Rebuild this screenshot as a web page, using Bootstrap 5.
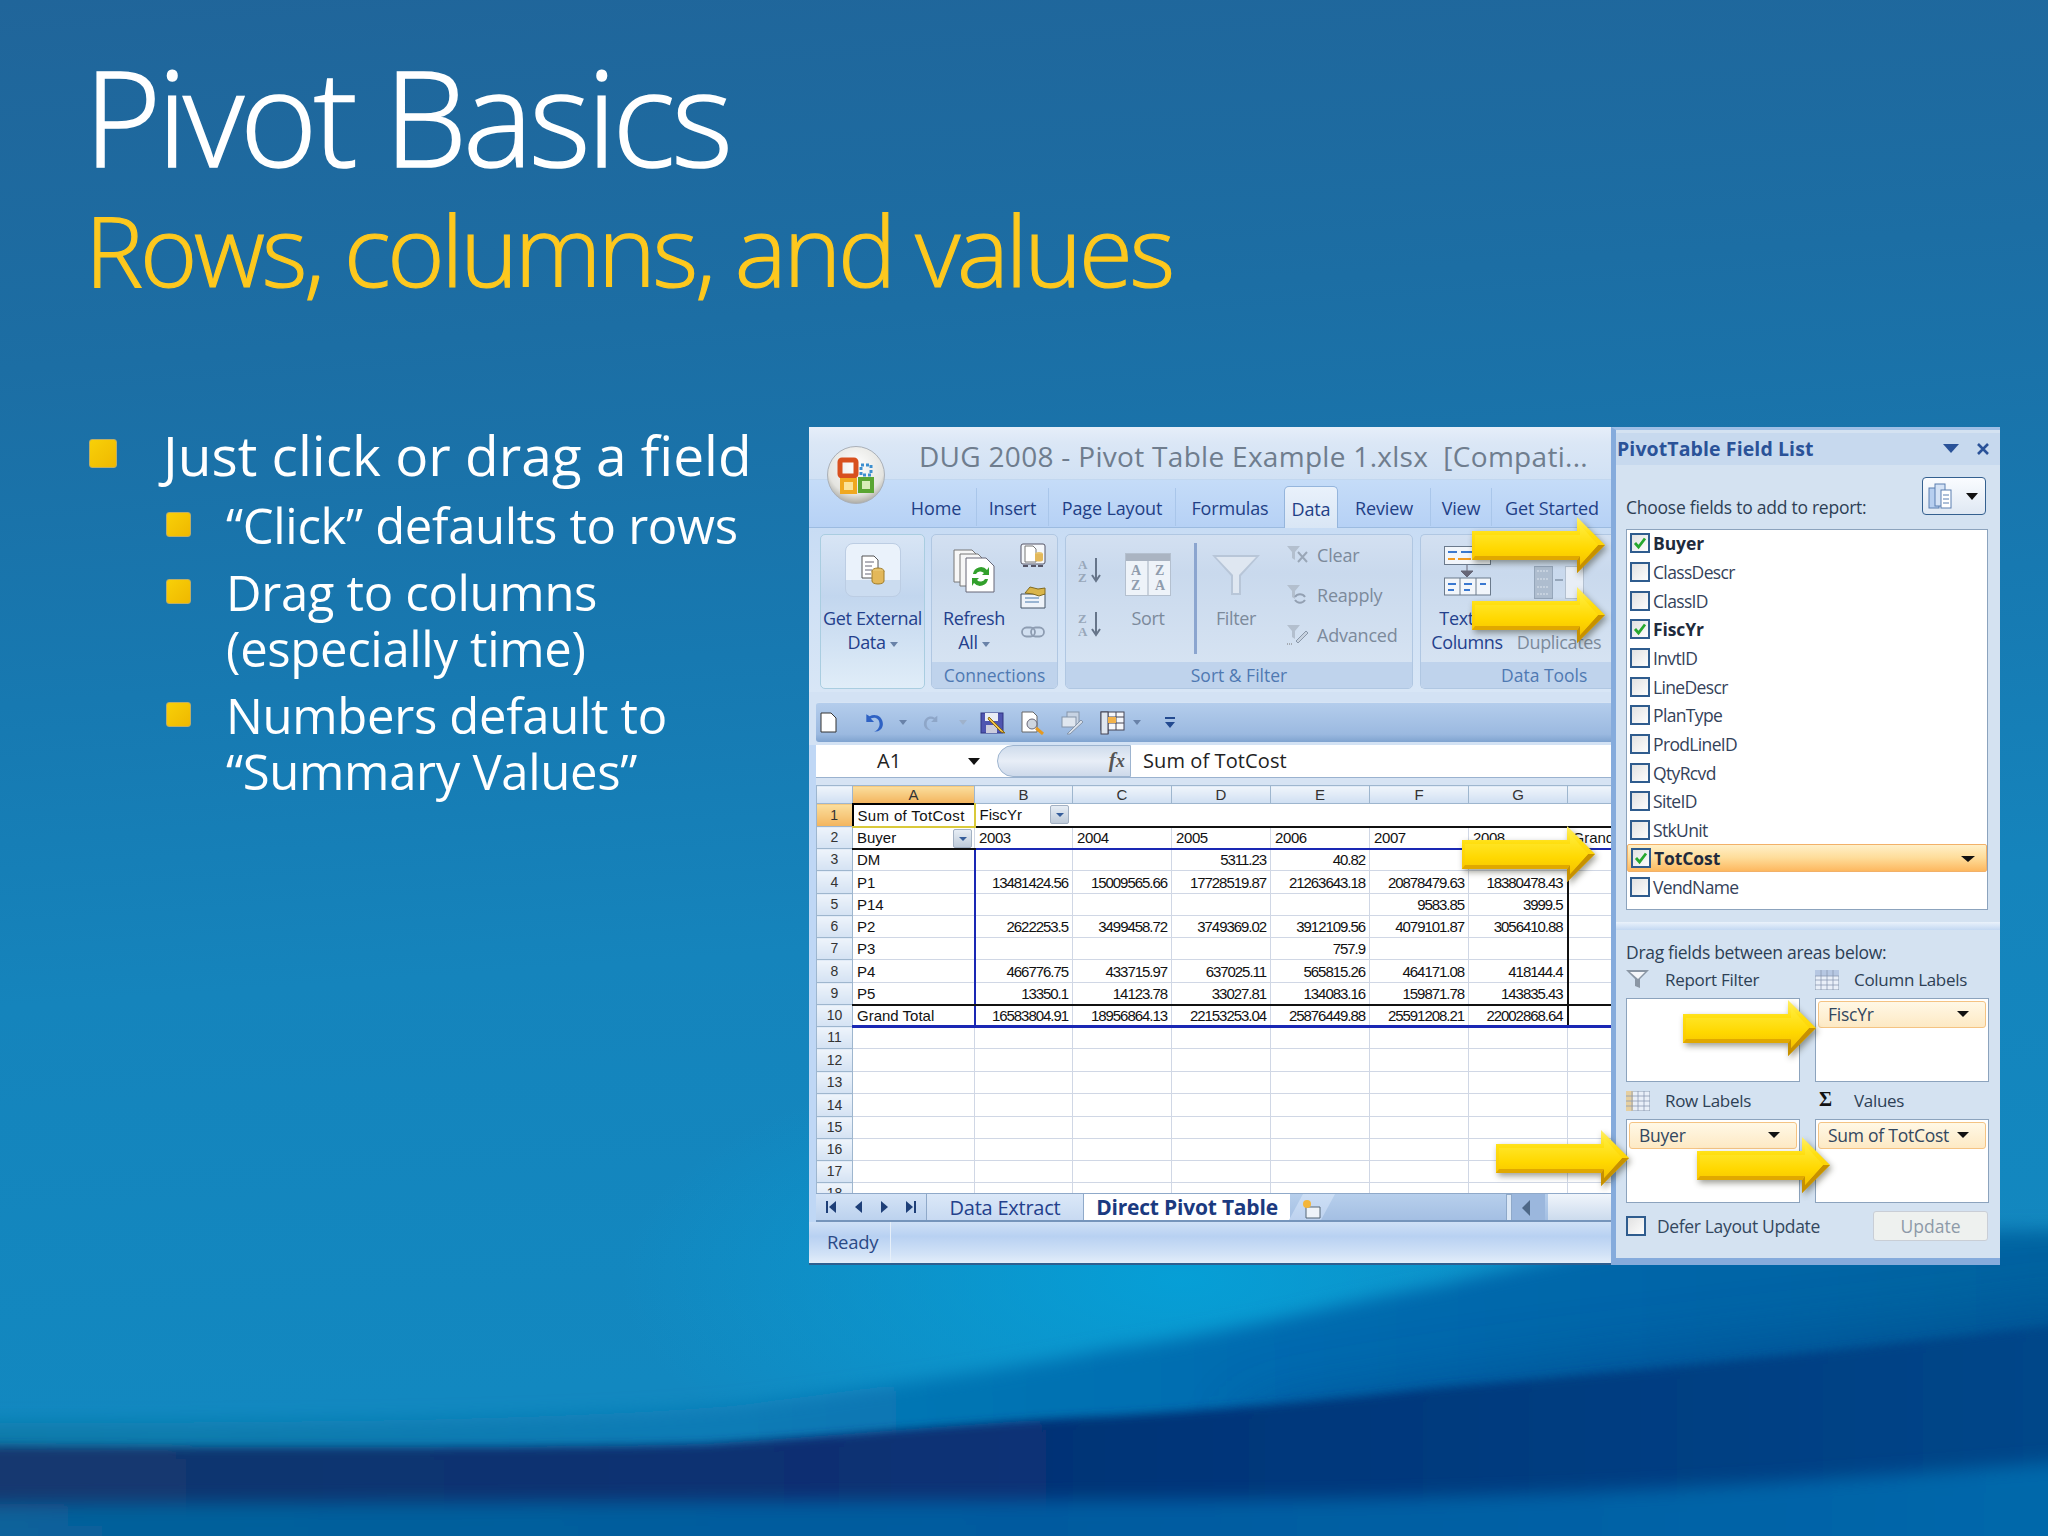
<!DOCTYPE html>
<html lang="en">
<head>
<meta charset="utf-8">
<title>Pivot Basics</title>
<link href="https://cdn.jsdelivr.net/npm/bootstrap@5.3.0/dist/css/bootstrap.min.css" rel="stylesheet">
<style>
html,body{margin:0;padding:0;width:2048px;height:1536px;overflow:hidden;}
body{font-family:"Open Sans","Noto Sans",sans-serif;background:#1a74ab;}
.slide{position:relative;width:2048px;height:1536px;overflow:hidden;background:linear-gradient(176deg,#20659a 0%,#1c6ea4 22%,#1779b1 42%,#1584bc 60%,#1288c0 85%);}
.bgart{position:absolute;left:0;top:0;width:2048px;height:1536px;}
.stage{position:relative;width:2048px;height:1536px;}
.head{height:424px;padding:50px 0 0 84px;}
.ttl{font-size:132px;line-height:132px;font-weight:300;color:#fff;-webkit-text-stroke:1.6px #fff;letter-spacing:-3.9px;margin:0;}
.subttl{font-size:98px;line-height:100px;font-weight:300;color:#fdc81e;-webkit-text-stroke:1.2px #fdc81e;letter-spacing:-3.3px;margin:17px 0 0 1px;}
.lhs{width:809px;padding-left:89px;}
.pt1{font-size:55px;line-height:62px;color:#fff;font-weight:400;letter-spacing:0;}
.pt2{font-size:49px;line-height:56px;color:#fff;font-weight:400;margin-top:11px;margin-left:77px;letter-spacing:-.32px;}
.sq1,.sq2{flex:none;display:block;background:linear-gradient(135deg,#f8d008,#efb800);border:1px solid #b9ad6a;border-radius:3px;}
.sq1{width:28px;height:29px;margin-top:15px;margin-right:46px;}
.sq2{width:25px;height:25px;margin-top:15px;margin-right:35px;}
.win{width:1191px;height:838px;margin-top:3px;position:relative;border-radius:5px 0 0 5px;display:flex;background:#bcd4f2;}
.xl{width:802px;height:838px;overflow:hidden;flex:none;position:relative;background:#bfd7f5;font-size:18px;}
.tbar{height:53px;padding:11px 0 0 110px;background:linear-gradient(#e6eef9,#dbe7f6 30%,#d1e1f4);font-size:28px;line-height:36px;color:#6f7d8e;letter-spacing:.3px;white-space:pre;border-bottom:1px solid #c2d7ef;}
.logo{position:absolute;left:18px;top:19px;width:58px;height:58px;}
.tabrow{height:47px;display:flex;padding-left:87px;background:linear-gradient(#c5dcf8,#b6d1f5);color:#1f3f86;font-size:18px;line-height:46px;letter-spacing:-.15px;text-align:center;}
.tb{flex:none;border-right:1px solid #a9c6ea;height:38px;margin-top:8px;line-height:40px;}
.t1{width:81px}.t2{width:72px}.t3{width:127px}.t4{width:108px;border-right:0}.t5b{width:54px}.t6{width:93px}.t7{width:61px}.t8{width:120px;border-right:0}
.t5{width:54px;height:42px;margin-top:6px;line-height:44px;border:1px solid #95b5dc;border-bottom:0;border-radius:5px 5px 0 0;background:linear-gradient(#e9f1fb,#d9e6f5);}
.ribbon{height:165px;padding:6px 0 0 11px;display:flex;background:linear-gradient(#c8dcf4,#d8e6f6);border-top:1px solid #9cbbe0;}
.rgrp{flex:none;height:155px;border:1px solid #b0c7e2;border-radius:5px;overflow:hidden;display:flex;flex-direction:column;background:linear-gradient(#d3e0f1,#c9d9ed 25%,#d6e3f2 85%);margin-right:6px;color:#23408c;line-height:24px;}
.g1{width:105px;background:linear-gradient(#d8e5f5,#c2d6ee 40%,#e0edf8);border-color:#a9cde0;}
.g2{width:127px}.g3{width:348px;margin-left:1px}.g4{width:230px;margin-left:1px;border-right:0}
.rb{height:128px;display:flex;position:relative;}
.rc{height:26px;background:#bfd3ec;color:#4f79b2;text-align:center;line-height:26px;font-size:17.5px;}
.big{display:flex;flex-direction:column;align-items:center;text-align:center;}
.big .ic{height:71px;display:flex;align-items:center;justify-content:center;}
.big span{display:block;white-space:nowrap;letter-spacing:-.35px;}
.gxb{width:56px;height:54px;border-radius:8px;background:linear-gradient(#eaf2fb 70%,#cbdcf0 70%);border:1px solid #bccde3;display:flex;align-items:center;justify-content:center;margin-top:8px;margin-bottom:9px;}
.ref{padding-left:11px;}
.dis{color:#7c8a9b;}
.car{display:inline-block;width:0;height:0;border-left:4px solid transparent;border-right:4px solid transparent;border-top:5px solid #6982a8;vertical-align:middle;margin-left:4px;}
.car3{border-top-color:#9fb2cb;}
.smcol{display:flex;flex-direction:column;align-items:center;gap:17px;padding-top:8px;width:36px;}
.azc{display:flex;flex-direction:column;padding:22px 0 0 12px;gap:28px;}
.srt{width:70px;margin-left:11px;}
.rsep{width:3px;height:111px;background:#8ba5cf;margin:8px 17px 0 11px;flex:none;}
.flt{width:48px;margin-left:-2px;}
.rows3{display:flex;flex-direction:column;margin-left:27px;}
.rows3 div{height:40px;display:flex;align-items:center;gap:9px;letter-spacing:-.2px;white-space:nowrap;}
.tcol{width:92px}.rmd{width:88px;margin-left:2px;}
.dtc{padding-left:80px;text-align:left;}
.qat{height:53px;padding:10px 0 0 7px;background:#d3e2f4;}
.qatin{height:40px;display:flex;align-items:center;background:linear-gradient(#b4cdec,#9bb9e0 80%,#7fa3cf);border-radius:3px 0 0 3px;border-top:1px solid #d7e4f4;position:relative;}
.qic{flex:none;display:block;}
.m4{margin-left:4px}.m26{margin-left:26px}.m15{margin-left:15px}.m16{margin-left:16px}.m19{margin-left:19px}.m13{margin-left:13px}.m8{margin-left:8px}.m24{margin-left:24px}
.fbar{height:32px;margin:0 0 0 7px;display:flex;background:#fff;font-size:20px;line-height:32px;color:#222;}
.nbox{width:181px;position:relative;font-size:20px;padding-left:61px;flex:none;}
.ntri{position:absolute;left:152px;top:13px;border-left:6px solid transparent;border-right:6px solid transparent;border-top:7px solid #111;}
.fxb{width:134px;flex:none;background:linear-gradient(#cfdcec,#e8eef7 50%,#cdd9ea);border-radius:18px 0 0 18px;border:1px solid #9db4cf;position:relative;text-align:right;padding-right:5px;font-family:"Liberation Serif",serif;font-style:italic;font-size:21px;font-weight:700;color:#555;line-height:28px;}
.fxt{padding-left:12px;letter-spacing:.1px;}
.fgap{height:8px;margin-left:7px;background:#d6e3f3;border-top:1px solid #9ab2cf;}
.gridw{height:408px;overflow:hidden;margin-left:7px;background:#fff;}
.sh{border-collapse:collapse;table-layout:fixed;width:901px;font-family:"Liberation Sans",Arial,sans-serif;font-size:15px;color:#111;}
.sh td,.sh th{border:1px solid #d0d7e5;padding:0 4px;white-space:nowrap;overflow:hidden;font-weight:400;line-height:15px;position:relative;}
.sh tr{height:22px;}
.sh tr.rw3{height:23px;}
.sh tr.hh{height:18px;}
.sh tr.hh th{background:linear-gradient(#f0f5fb,#cfdff2);text-align:center;border-color:#9eb6ce;color:#333;font-size:15px;padding:0;}
.sh tr.hh th.on{background:linear-gradient(#fbdf9e,#f3b45d);}
.sh th.rh{background:linear-gradient(#eef4fb,#d4e2f3);text-align:center;font-size:14px;padding:0;border-color:#9eb6ce;color:#333;}
.sh th.rh.on{background:linear-gradient(#fbdf9e,#f3b45d);}
.sh td.n{text-align:right;letter-spacing:-1.05px;}
.sh td.y{letter-spacing:-.4px;}
.sh td.nb{border-color:transparent;}
.sh td.sel{border:2px solid #000;border-right-color:#d9c93a;border-bottom-color:#d9c93a;letter-spacing:.35px;}
.sh td.kt{border-top:2px solid #111;}
.sh td.kb{border-bottom:2px solid #111;}
.sh td.ub{border-bottom:2px solid #1a28b4;}
.sh td.ub3{border-bottom:3px solid #1a28b4;}
.sh td.ur{border-right:2px solid #1a28b4;}
.sh td.kr{border-right:2px solid #111;}
.c1{width:36px}.c2{width:122px}.c3{width:98px}.c4{width:99px}.c5{width:150px}
.dd{position:absolute;right:2px;top:1px;width:19px;height:19px;background:linear-gradient(#e6edf5,#bfcbd9);border:1px solid #a3b1c3;border-radius:2px;}
.dd:after{content:"";position:absolute;left:5px;top:7px;border-left:4px solid transparent;border-right:4px solid transparent;border-top:4px solid #355d9a;}
.dd2{right:3px;}
.tabs{height:29px;margin-left:7px;display:flex;background:linear-gradient(#b7cfec,#a4bfe3);border-top:1px solid #8fa9c9;border-bottom:2px solid #7594bb;position:relative;overflow:hidden;}
.navb{width:111px;flex:none;display:flex;align-items:center;background:linear-gradient(#d4e3f6,#bcd2ee);border-right:1px solid #8fa9c9;}
.shtab{flex:none;line-height:27px;text-align:center;font-size:20px;color:#23408c;letter-spacing:-.25px;}
.sh1{width:157px;background:linear-gradient(#dbe8f8,#c8daf2);border-right:1px solid #8fa9c9;}
.sh2{width:206px;background:#fff;font-weight:700;color:#1b3a80;font-size:21px;letter-spacing:-.2px;}
.sh3{width:46px;background:linear-gradient(#cddff5,#bdd2ef);clip-path:polygon(14px 0,100% 0,calc(100% - 14px) 100%,0 100%);margin-left:-1px;}
.scrl{position:absolute;right:0;top:0;height:28px;width:105px;display:flex;}
.scrl1{width:6px;background:#dce8f6;border:1px solid #8fa9c9;}
.scrl2{width:33px;background:#9bb7dd;position:relative;}
.scrl2:after{content:"";position:absolute;left:10px;top:6px;border-top:8px solid transparent;border-bottom:8px solid transparent;border-right:8px solid #4e6887;}
.scrl3{flex:1;margin-left:3px;background:linear-gradient(#f0f5fb,#c9d9ec);}
.stat{height:41px;display:flex;background:linear-gradient(#cfe0f6,#b8d1f2 35%,#d3e3f7 80%,#e3eefa);}
.stat div{width:75px;border-right:1px solid #e6eff9;padding:5px 0 0 11px;font-size:18.5px;line-height:30px;color:#2b4a86;letter-spacing:-.3px;margin-left:7px;}
.xlb{height:2px;background:#2e5f90;}
.pane{flex:none;width:389px;height:838px;padding-top:3px;background:#d4e2f1;border-left:5px solid #85abdc;border-top:3px solid #9fbfe6;border-bottom:7px solid #85abdc;display:flex;flex-direction:column;color:#33475e;font-size:17.5px;position:relative;}
.phd{height:32px;flex:none;display:flex;align-items:center;background:#c7d9ee;color:#2a5298;font-weight:700;font-size:19.5px;padding-left:1px;letter-spacing:.1px;position:relative;}
.ptri{position:absolute;left:327px;top:11px;border-left:8px solid transparent;border-right:8px solid transparent;border-top:9px solid #2a5298;}
.px{position:absolute;left:360px;top:9px;width:14px;height:14px;}
.pch{height:64px;flex:none;position:relative;padding:29px 0 0 10px;line-height:26px;letter-spacing:-.25px;color:#2d3f55;}
.pbtn{position:absolute;left:306px;top:12px;width:64px;height:38px;border-radius:4px;border:1px solid #34608f;background:linear-gradient(#fafcff,#dfe8f3);display:flex;align-items:center;gap:14px;padding-left:5px;}
.ptb{border-top:7px solid #111;border-left:6px solid transparent;border-right:6px solid transparent;}
.flist{margin:0 0 0 10px;width:362px;height:381px;flex:none;background:#fff;border:1px solid #8ca3bd;padding:0 0 0 3px;}
.frow{height:28.67px;display:flex;align-items:center;gap:3px;position:relative;line-height:20px;letter-spacing:-.65px;color:#34425a;}
.frow:first-child{margin-top:-1px;}
.frow b{color:#1f2b3d;font-weight:700;letter-spacing:-.1px;}
.frow.act{margin:0 1px 0 -3px;padding-left:3px;width:360px;background:linear-gradient(#fff0c8,#fedc99 50%,#fdb85f);border:1px solid #f2b169;border-radius:2px;height:28px;}
.cbx{flex:none;width:20px;height:20px;border:2px solid #2f5c8e;background:linear-gradient(135deg,#e2e2e2,#fdfdfd);display:block;}
.cbx svg{display:block;width:16px;height:16px;}
.frow .tri{position:absolute;right:11px;top:11px;border-top:6px solid #111;border-left:7px solid transparent;border-right:7px solid transparent;}
.split{height:8px;margin-top:12px;flex:none;background:linear-gradient(#eaf2fb,#c3d8f2);}
.pdr{padding:9px 0 0 10px;line-height:26px;height:36px;flex:none;letter-spacing:-.3px;color:#2d3f55;}
.zones{display:grid;grid-template-columns:174px 174px;column-gap:15px;margin-left:10px;}
.zlab{height:32px;padding-top:4px;display:flex;align-items:flex-start;position:relative;letter-spacing:-.3px;font-size:17px;color:#2d3f55;}
.zlab svg{flex:none;}
.zlab span{position:absolute;left:39px;line-height:24px;top:2px;white-space:nowrap;}
.zone{height:84px;background:#fff;border:1px solid #8ca3bd;padding:2px;}
.zl2{margin-top:5px;}
.chip{height:27px;border:1px solid #f4c383;border-radius:3px;background:linear-gradient(#fff8e6,#fde9c4);position:relative;padding-left:9px;line-height:25px;color:#33475e;letter-spacing:-.25px;font-size:17.5px;}
.chip:after{content:"";position:absolute;right:16px;top:9px;border-top:6px solid #111;border-left:6px solid transparent;border-right:6px solid transparent;}
.pft{display:flex;align-items:center;margin:8px 0 0 10px;position:relative;height:30px;}
.pft span{margin-left:11px;letter-spacing:-.35px;}
.upd{position:absolute;left:247px;top:0;width:115px;height:30px;border:1px solid #c9ced6;border-radius:3px;background:#eef1ef;color:#8d9aa8;text-align:center;line-height:28px;}
.arw{position:absolute;width:133px;height:56px;filter:drop-shadow(2px 3px 3px rgba(40,40,20,.45));overflow:visible;}
.a1{left:663px;top:90px}.a2{left:663px;top:160px}.a3{left:653px;top:399px}.a4{left:687px;top:703px}.a5{left:874px;top:573px}.a6{left:888px;top:710px}
</style>
</head>
<body>
<div class="slide">
<svg class="bgart" viewBox="0 0 2048 1536" preserveAspectRatio="none" aria-hidden="true">
<defs>
<filter id="bl1" x="-10%" y="-20%" width="120%" height="140%"><feGaussianBlur stdDeviation="9"/></filter>
<filter id="bl2" x="-10%" y="-20%" width="120%" height="140%"><feGaussianBlur stdDeviation="5"/></filter>
<filter id="bl4" x="-30%" y="-60%" width="160%" height="220%"><feGaussianBlur stdDeviation="32"/></filter>
<linearGradient id="gBand" x1="0" x2="1" y1="0" y2="0"><stop offset="0" stop-color="#14396f"/><stop offset=".4" stop-color="#0a2f72"/><stop offset=".7" stop-color="#003a7e"/><stop offset="1" stop-color="#00478a"/></linearGradient>
<linearGradient id="gMid" x1="0" x2="1" y1="0" y2="0"><stop offset="0" stop-color="#0a7aa9"/><stop offset=".35" stop-color="#0a7cb6"/><stop offset=".6" stop-color="#006cb0"/><stop offset=".8" stop-color="#0065a8"/><stop offset="1" stop-color="#00649f"/></linearGradient>
<linearGradient id="gLow" x1="0" x2="1" y1="0" y2="0"><stop offset="0" stop-color="#07629a"/><stop offset=".5" stop-color="#025a9f"/><stop offset="1" stop-color="#0068ab"/></linearGradient>
<radialGradient id="gGlow"><stop offset="0" stop-color="#04a3da"/><stop offset="1" stop-color="#04a3da" stop-opacity="0"/></radialGradient>
</defs>
<ellipse cx="1180" cy="1280" rx="560" ry="240" fill="url(#gGlow)" opacity=".85"/>
<path filter="url(#bl1)" d="M-40 1423 C300 1423 560 1420 731 1406 C900 1385 1030 1365 1110 1349 C1250 1330 1350 1300 1437 1286 C1530 1265 1600 1248 1680 1236 C1800 1232 1950 1232 2100 1230 L2100 1600 L-40 1600Z" fill="url(#gMid)"/>
<path filter="url(#bl4)" d="M1250 1420 C1500 1370 1800 1350 2100 1310 L2100 1520 L1250 1520Z" fill="#00478c" opacity=".75"/>
<path filter="url(#bl2)" d="M-40 1446 C300 1448 560 1448 705 1444 C850 1435 1000 1420 1110 1416 C1250 1408 1350 1398 1437 1388 C1650 1370 1850 1350 2100 1320 L2100 1600 L-40 1600Z" fill="url(#gBand)"/>
<path filter="url(#bl1)" d="M-40 1504 C500 1502 1000 1500 1306 1499 C1600 1495 1850 1480 2100 1458 L2100 1600 L-40 1600Z" fill="url(#gLow)"/>
</svg>
<svg width="0" height="0" class="position-absolute" aria-hidden="true">
<defs>
<linearGradient id="ya" x1="0" x2="0" y1="0" y2="1"><stop offset="0" stop-color="#fff06a"/><stop offset=".3" stop-color="#ffdf10"/><stop offset=".75" stop-color="#fbc800"/><stop offset="1" stop-color="#d99c00"/></linearGradient>
<linearGradient id="yb" x1="0" x2="0" y1="0" y2="1"><stop offset="0" stop-color="#ffec3a"/><stop offset=".6" stop-color="#ffd800"/><stop offset="1" stop-color="#f5c100"/></linearGradient>
<symbol id="arrow" viewBox="0 0 133 56">
<polygon points="0,14 105,14 105,0 133,28 105,56 105,43 0,43" fill="url(#ya)"/>
<polygon points="105,56 105,43 108,39 108,48 126,28 133,28" fill="#c79100"/>
<polygon points="0,43 105,43 108,39 3,39" fill="#e0a800"/>
<polygon points="3,18 108,18 108,8 126,28 108,48 108,39 3,39" fill="url(#yb)"/>
</symbol>
</defs>
</svg>
<div class="stage">
<header class="head">
<h1 class="ttl">Pivot Basics</h1>
<h2 class="subttl">Rows, columns, and values</h2>
</header>
<div class="d-flex align-items-start">
<ul class="lhs list-unstyled m-0">
<li class="d-flex pt1"><span class="sq1"></span><span>Just click or drag a field</span></li>
<li class="d-flex pt2"><span class="sq2"></span><span>“Click” defaults to rows</span></li>
<li class="d-flex pt2"><span class="sq2"></span><span>Drag to columns<br>(especially time)</span></li>
<li class="d-flex pt2"><span class="sq2"></span><span>Numbers default to<br>“Summary Values”</span></li>
</ul>
<div class="win">
<div class="xl">
<div class="tbar">DUG 2008 - Pivot Table Example 1.xlsx  [Compati...</div>
<svg class="logo" viewBox="0 0 58 58" aria-hidden="true">
<defs><radialGradient id="lg" cx=".5" cy=".35" r=".7"><stop offset="0" stop-color="#fff"/><stop offset=".7" stop-color="#e4e4e0"/><stop offset="1" stop-color="#9c9a92"/></radialGradient></defs>
<circle cx="29" cy="29" r="28.5" fill="url(#lg)" stroke="#aab0b8"/>
<rect x="13" y="14" width="16" height="16" rx="2" fill="none" stroke="#d8501e" stroke-width="5"/>
<rect x="34" y="19" width="10" height="10" fill="none" stroke="#3d8fd0" stroke-width="3" stroke-dasharray="3 2"/>
<rect x="15" y="34" width="13" height="12" fill="#fbe39a" stroke="#f0a820" stroke-width="4"/>
<rect x="33" y="33" width="12" height="12" fill="#d8edb8" stroke="#5aa532" stroke-width="4"/>
</svg>
<div class="tabrow"><span class="tb t1">Home</span><span class="tb t2">Insert</span><span class="tb t3">Page Layout</span><span class="tb t4">Formulas</span><span class="tb t5">Data</span><span class="tb t6">Review</span><span class="tb t7">View</span><span class="tb t8">Get Started</span></div>
<div class="ribbon">
<div class="rgrp g1"><div class="big">
<div class="gxb"><svg width="24" height="34" viewBox="0 0 24 34"><path d="M1 3h12l4 4v18H1z" fill="#fff" stroke="#555"/><path d="M4 9h9M4 13h7M4 17h7M4 21h6" stroke="#667" /><ellipse cx="17" cy="18" rx="6" ry="3" fill="#e7c36b" stroke="#a07c28"/><path d="M11 18v10c0 4 12 4 12 0V18" fill="#e3b85a" stroke="#a07c28"/></svg></div>
<span>Get External</span><span>Data<i class="car"></i></span></div></div>
<div class="rgrp g2"><div class="rb">
<div class="big ref"><div class="ic"><svg width="42" height="46" viewBox="0 0 42 46"><path d="M1 2h18l6 6v26H1z" fill="#f7f7f7" stroke="#777"/><path d="M7 6h18l6 6v26H7z" fill="#f7f7f7" stroke="#777"/><path d="M13 10h20l8 8v26H13z" fill="#fff" stroke="#667"/><path d="M20 26a8 8 0 0 1 14-4l2-3v8h-7l2-2a5 5 0 0 0-8 1z" fill="#32a02c"/><path d="M35 31a8 8 0 0 1-14 4l-2 3v-8h7l-2 2a5 5 0 0 0 8-1z" fill="#32a02c"/></svg></div><span>Refresh</span><span>All<i class="car"></i></span></div>
<div class="smcol ms-2 ps-1"><svg width="26" height="25" viewBox="0 0 26 25"><rect x="1" y="1" width="24" height="20" rx="2" fill="#f4f7fb" stroke="#556"/><path d="M5 3h8l3 3v13H5z" fill="#fff" stroke="#777"/><ellipse cx="19" cy="11" rx="4" ry="2" fill="#e7c36b"/><path d="M15 11v6c0 2 8 2 8 0v-6" fill="#e3b85a"/><path d="M3 23h5M11 23h5M18 23h5" stroke="#556" stroke-width="2"/></svg>
<svg width="26" height="24" viewBox="0 0 26 24"><path d="M1 9h24v14H1z" fill="#eef3f9" stroke="#456"/><path d="M5 13h14M5 17h14" stroke="#47a"/><path d="M5 8l5-6 8 2 7-1v6l-6 2-6-2z" fill="#d9b54a" stroke="#806a20"/></svg>
<svg width="24" height="12" viewBox="0 0 24 12"><rect x="1" y="1.500" width="13" height="9" rx="4.500" fill="none" stroke="#8e9db2" stroke-width="1.800"/><rect x="10" y="1.500" width="13" height="9" rx="4.500" fill="none" stroke="#8e9db2" stroke-width="1.800"/></svg></div>
</div><div class="rc">Connections</div></div>
<div class="rgrp g3"><div class="rb">
<div class="azc">
<svg width="24" height="26" viewBox="0 0 24 26"><text x="0" y="12" font-family="Liberation Serif" font-weight="700" font-size="13" fill="#98a7b9">A</text><text x="0" y="25" font-family="Liberation Serif" font-weight="700" font-size="13" fill="#98a7b9">Z</text><path d="M18 1v21M14 18l4 6 4-6" stroke="#66758a" stroke-width="2" fill="none"/></svg>
<svg width="24" height="26" viewBox="0 0 24 26"><text x="0" y="12" font-family="Liberation Serif" font-weight="700" font-size="13" fill="#98a7b9">Z</text><text x="0" y="25" font-family="Liberation Serif" font-weight="700" font-size="13" fill="#98a7b9">A</text><path d="M18 1v21M14 18l4 6 4-6" stroke="#66758a" stroke-width="2" fill="none"/></svg>
</div>
<div class="big dis srt"><div class="ic"><svg width="46" height="43" viewBox="0 0 46 43" class="mt-2"><rect x=".5" y=".5" width="45" height="42" fill="#eef3f9" stroke="#b4c0cf"/><rect x="1" y="1" width="44" height="7" fill="#aab4c2"/><path d="M23 8v34" stroke="#a3afbe"/><g font-family="Liberation Serif" font-weight="700" font-size="14" fill="#8f9cad"><text x="6" y="22">A</text><text x="30" y="22">Z</text><text x="6" y="37">Z</text><text x="30" y="37">A</text></g></svg></div><span>Sort</span></div>
<div class="rsep"></div>
<div class="big dis flt"><div class="ic"><svg width="48" height="42" viewBox="0 0 48 42" class="mt-2"><path d="M0 1h48L29 22v19H19V22z" fill="#b8c6d8"/><path d="M4 3h40L27 21v18h-6V21z" fill="#dfe7f1"/></svg></div><span>Filter</span></div>
<div class="rows3 dis">
<div><svg width="21" height="18" viewBox="0 0 21 18"><path d="M0 0h13L8 6v8L5 12V6z" fill="#b3bfce"/><path d="M11 6l9 10M20 6l-9 10" stroke="#9aa7b7" stroke-width="2"/></svg>Clear</div>
<div><svg width="21" height="20" viewBox="0 0 21 20"><path d="M0 0h13L8 6v8L5 12V6z" fill="#b3bfce"/><path d="M8 12a6 6 0 0 1 10 0M18 15a6 6 0 0 1-10 0" stroke="#93a0b2" stroke-width="2" fill="none"/></svg>Reapply</div>
<div><svg width="21" height="20" viewBox="0 0 21 20"><path d="M0 0h13L8 6v8L5 12V6z" fill="#b3bfce"/><path d="M9 16L19 6l2 2-10 10z" fill="#c7d2df" stroke="#8a98aa"/><path d="M0 19h6" stroke="#777" stroke-dasharray="1 1"/></svg>Advanced</div>
</div>
</div><div class="rc">Sort &amp; Filter</div></div>
<div class="rgrp g4"><div class="rb">
<div class="big tcol"><div class="ic"><svg width="47" height="50" viewBox="0 0 47 50"><rect x=".5" y=".5" width="46" height="18" fill="#f2f6fb" stroke="#6b7a8c"/><path d="M4 6h9M17 6h13M33 6h8" stroke="#3a78d0" stroke-width="2"/><path d="M4 13h7M14 13h13M32 13h9" stroke="#f29a20" stroke-width="2"/><path d="M23 19v7M17 25h12l-6 6z" fill="#667" stroke="#667"/><rect x=".5" y="32" width="46" height="17" fill="#f2f6fb" stroke="#6b7a8c"/><path d="M16 32v17M32 32v17" stroke="#6b7a8c"/><path d="M4 38h8M20 38h8M36 38h6M4 44h6M20 44h6" stroke="#3a78d0" stroke-width="2"/></svg></div><span>Text to</span><span>Columns</span></div>
<div class="big dis rmd"><div class="ic"><svg width="50" height="34" viewBox="0 0 50 34" class="mt-4"><rect x=".5" y=".5" width="18" height="32" fill="#aebdcf" stroke="#95a6ba"/><rect x="31.500" y=".5" width="18" height="32" fill="#e8eef6" stroke="#b3c0d0"/><path d="M21 14h8" stroke="#95a6ba" stroke-width="2"/><path d="M3 5h12M3 13h12M3 21h12M3 28h12" stroke="#dde5ee" stroke-dasharray="2 1"/></svg></div><span>Remove</span><span>Duplicates</span></div>
</div><div class="rc dtc">Data Tools</div></div>
</div>
<div class="qat"><div class="qatin">
<svg class="qic m4" width="17" height="21" viewBox="0 0 17 21"><path d="M1 1h10l5 5v14H1z" fill="#fff" stroke="#333"/></svg>
<svg class="qic m26" width="21" height="20" viewBox="0 0 19 18"><path d="M3 1v7h7L7 5c4-2 8 0 8 5 0 3-2 6-5 7 5 0 8-3 8-7 0-7-7-10-12-7z" fill="#2f62c4"/></svg>
<i class="car m15"></i>
<svg class="qic m16" width="17" height="18" viewBox="0 0 19 18"><path d="M16 1v7H9l3-3c-4-2-8 0-8 5 0 3 2 6 5 7-5 0-8-3-8-7 0-7 7-10 12-7z" fill="#8ea6c8"/></svg>
<i class="car car3 m19"></i>
<svg class="qic m13" width="26" height="22" viewBox="0 0 26 22"><rect x="1" y="1" width="22" height="20" fill="#4f55b0" stroke="#303580"/><rect x="5" y="1" width="13" height="8" fill="#e8ecf5"/><rect x="6" y="13" width="11" height="8" fill="#ccd"/><path d="M9 5l14 14 2 2-4-1L8 7z" fill="#f2c14e" stroke="#8a6a10"/></svg>
<svg class="qic m15" width="24" height="24" viewBox="0 0 24 24"><path d="M1 1h11l4 4v16H1z" fill="#fff" stroke="#666"/><circle cx="11" cy="13" r="5" fill="#cfd6df" stroke="#667"/><path d="M15 17l7 6" stroke="#e69a20" stroke-width="3"/></svg>
<svg class="qic m16" width="23" height="24" viewBox="0 0 23 24"><rect x="6" y="1" width="12" height="13" fill="#c7d3e3" stroke="#8595aa"/><rect x="1" y="6" width="14" height="10" fill="#dfe6ef" stroke="#8595aa"/><path d="M6 23L20 9l2 2L9 23z" fill="#d8dfe9" stroke="#8595aa"/></svg>
<svg class="qic m16" width="25" height="24" viewBox="0 0 25 24"><rect x="1" y="1" width="23" height="18" fill="#f5f7fb" stroke="#445"/><path d="M1 6h23M1 12h23M8 1v22M16 1v18" stroke="#445"/><rect x="1" y="1" width="7" height="22" fill="#dfe6ef" stroke="#445"/><rect x="8" y="6" width="8" height="6" fill="#f2b24a"/></svg>
<i class="car m8"></i>
<svg class="qic m24" width="10" height="11" viewBox="0 0 10 11"><path d="M0 0h10v2H0zM0 5h10L5 11z" fill="#234a90"/></svg>
</div></div>
<div class="fbar"><div class="nbox">A1<i class="ntri"></i></div><div class="fxb">f<small>x</small></div><div class="fxt">Sum of TotCost</div></div>
<div class="fgap"></div>
<div class="gridw">
<table class="sh">
<colgroup><col class="c1"><col class="c2"><col class="c3"><col class="c4"><col class="c4"><col class="c4"><col class="c4"><col class="c4"><col class="c5"></colgroup>
<tr class="hh"><th></th><th class="on">A</th><th>B</th><th>C</th><th>D</th><th>E</th><th>F</th><th>G</th><th></th></tr>
<tr class="rw3"><th class="rh on">1</th><td class="sel">Sum of TotCost</td><td class="nb">FiscYr<i class="dd dd2"></i></td><td class="nb"></td><td class="nb"></td><td class="nb"></td><td class="nb"></td><td class="nb"></td><td class="nb"></td></tr>
<tr><th class="rh">2</th><td class="kt kb">Buyer<i class="dd"></i></td><td class="kt ub y">2003</td><td class="kt ub y">2004</td><td class="kt ub y">2005</td><td class="kt ub y">2006</td><td class="kt ub y">2007</td><td class="kt ub y kr">2008</td><td class="kt ub">Grand Total</td></tr>
<tr><th class="rh">3</th><td class="ur">DM</td><td></td><td></td><td class="n">5311.23</td><td class="n">40.82</td><td></td><td class="kr"></td><td class="n">5352.05</td></tr>
<tr class="rw3"><th class="rh">4</th><td class="ur">P1</td><td class="n">13481424.56</td><td class="n">15009565.66</td><td class="n">17728519.87</td><td class="n">21263643.18</td><td class="n">20878479.63</td><td class="n kr">18380478.43</td><td class="n">106342110.33</td></tr>
<tr><th class="rh">5</th><td class="ur">P14</td><td></td><td></td><td></td><td></td><td class="n">9583.85</td><td class="n kr">3999.5</td><td class="n">13583.35</td></tr>
<tr><th class="rh">6</th><td class="ur">P2</td><td class="n">2622253.5</td><td class="n">3499458.72</td><td class="n">3749369.02</td><td class="n">3912109.56</td><td class="n">4079101.87</td><td class="n kr">3056410.88</td><td class="n">20918702.55</td></tr>
<tr><th class="rh">7</th><td class="ur">P3</td><td></td><td></td><td></td><td class="n">757.9</td><td></td><td class="kr"></td><td class="n">757.9</td></tr>
<tr class="rw3"><th class="rh">8</th><td class="ur">P4</td><td class="n">466776.75</td><td class="n">433715.97</td><td class="n">637025.11</td><td class="n">565815.26</td><td class="n">464171.08</td><td class="n kr">418144.4</td><td class="n">2985648.57</td></tr>
<tr><th class="rh">9</th><td class="ur kb">P5</td><td class="n kb">13350.1</td><td class="n kb">14123.78</td><td class="n kb">33027.81</td><td class="n kb">134083.16</td><td class="n kb">159871.78</td><td class="n kb kr">143835.43</td><td class="n kb">498291.26</td></tr>
<tr><th class="rh">10</th><td class="ur ub3">Grand Total</td><td class="n ub3">16583804.91</td><td class="n ub3">18956864.13</td><td class="n ub3">22153253.04</td><td class="n ub3">25876449.88</td><td class="n ub3">25591208.21</td><td class="n ub3 kr">22002868.64</td><td class="n ub3">131164447.06</td></tr>
<tr><th class="rh">11</th><td></td><td></td><td></td><td></td><td></td><td></td><td></td><td></td></tr>
<tr class="rw3"><th class="rh">12</th><td></td><td></td><td></td><td></td><td></td><td></td><td></td><td></td></tr>
<tr><th class="rh">13</th><td></td><td></td><td></td><td></td><td></td><td></td><td></td><td></td></tr>
<tr class="rw3"><th class="rh">14</th><td></td><td></td><td></td><td></td><td></td><td></td><td></td><td></td></tr>
<tr><th class="rh">15</th><td></td><td></td><td></td><td></td><td></td><td></td><td></td><td></td></tr>
<tr><th class="rh">16</th><td></td><td></td><td></td><td></td><td></td><td></td><td></td><td></td></tr>
<tr><th class="rh">17</th><td></td><td></td><td></td><td></td><td></td><td></td><td></td><td></td></tr>
<tr><th class="rh">18</th><td></td><td></td><td></td><td></td><td></td><td></td><td></td><td></td></tr>
</table>
</div>
<div class="tabs">
<div class="navb"><svg width="100" height="14" viewBox="0 0 100 14" class="ms-2"><g fill="#1e3f78"><rect x="2" y="1" width="2" height="12"/><path d="M12 1v12L5 7z"/><path d="M38 1v12l-7-6z"/><path d="M57 1v12l7-6z"/><path d="M82 1v12l7-6z"/><rect x="90" y="1" width="2" height="12"/></g></svg></div>
<div class="shtab sh1">Data Extract</div>
<div class="shtab sh2">Direct Pivot Table</div>
<div class="shtab sh3"><svg width="20" height="22" viewBox="0 0 20 22"><path d="M4 8h14v11H4z" fill="#eef3f9" stroke="#567"/><circle cx="5" cy="5" r="4" fill="#f4b63a"/></svg></div>
<div class="scrl"><i class="scrl1"></i><i class="scrl2"></i><i class="scrl3"></i></div>
</div>
<div class="stat"><div>Ready</div></div>
<div class="xlb"></div>
</div>
<aside class="pane">
<div class="phd">PivotTable Field List<i class="ptri"></i><svg class="px" viewBox="0 0 14 14"><path d="M2 2l10 10M12 2L2 12" stroke="#2a5298" stroke-width="2.600"/></svg></div>
<div class="pch">Choose fields to add to report:
<div class="pbtn"><svg width="24" height="26" viewBox="0 0 24 26"><rect x="1" y="5" width="10" height="20" fill="#b7cff0" stroke="#5b7eb0"/><rect x="7" y="1" width="10" height="22" fill="#d5e3f6" stroke="#5b7eb0"/><rect x="13" y="7" width="10" height="18" fill="#fff" stroke="#5b7eb0"/><path d="M15 12h6M15 16h6M15 20h6" stroke="#5b7eb0"/></svg><i class="ptb"></i></div></div>
<div class="flist">
<div class="frow"><i class="cbx"><svg viewBox="0 0 16 16"><path d="M3 8l3.500 4L13 3.500" stroke="#27a82f" stroke-width="2.800" fill="none"/></svg></i><b>Buyer</b></div>
<div class="frow"><i class="cbx"></i>ClassDescr</div>
<div class="frow"><i class="cbx"></i>ClassID</div>
<div class="frow"><i class="cbx"><svg viewBox="0 0 16 16"><path d="M3 8l3.500 4L13 3.500" stroke="#27a82f" stroke-width="2.800" fill="none"/></svg></i><b>FiscYr</b></div>
<div class="frow"><i class="cbx"></i>InvtID</div>
<div class="frow"><i class="cbx"></i>LineDescr</div>
<div class="frow"><i class="cbx"></i>PlanType</div>
<div class="frow"><i class="cbx"></i>ProdLineID</div>
<div class="frow"><i class="cbx"></i>QtyRcvd</div>
<div class="frow"><i class="cbx"></i>SiteID</div>
<div class="frow"><i class="cbx"></i>StkUnit</div>
<div class="frow act"><i class="cbx"><svg viewBox="0 0 16 16"><path d="M3 8l3.500 4L13 3.500" stroke="#27a82f" stroke-width="2.800" fill="none"/></svg></i><b>TotCost</b><i class="tri"></i></div>
<div class="frow"><i class="cbx"></i>VendName</div>
</div>
<div class="split"></div>
<div class="pdr">Drag fields between areas below:</div>
<div class="zones">
<div class="zlab"><svg width="23" height="18" viewBox="0 0 23 18"><path d="M0 0h23L14 9v9l-5-2V9z" fill="#8a96a4"/><path d="M4 2h15l-7 7z" fill="#f5f7fa"/></svg><span>Report Filter</span></div>
<div class="zlab"><svg width="24" height="20" viewBox="0 0 24 20"><rect width="24" height="20" fill="#e9eff8" stroke="#8a9bb2"/><rect width="24" height="6" fill="#b6c7e2"/><path d="M0 6h24M0 10h24M0 15h24M6 0v20M12 0v20M18 0v20" stroke="#8a9bb2" stroke-width=".8"/></svg><span>Column Labels</span></div>
<div class="zone"></div>
<div class="zone"><div class="chip">FiscYr</div></div>
<div class="zlab zl2"><svg width="24" height="20" viewBox="0 0 24 20"><rect width="24" height="20" fill="#e9eff8" stroke="#8a9bb2"/><rect width="7" height="20" fill="#e6cfa0"/><path d="M0 5h24M0 10h24M0 15h24M6 0v20M12 0v20M18 0v20" stroke="#8a9bb2" stroke-width=".8"/></svg><span>Row Labels</span></div>
<div class="zlab zl2"><svg width="24" height="16" viewBox="0 0 24 16" class="ms-1"><text x="0" y="15" font-family="Liberation Serif" font-weight="700" font-size="20" fill="#111">Σ</text></svg><span>Values</span></div>
<div class="zone"><div class="chip">Buyer</div></div>
<div class="zone"><div class="chip">Sum of TotCost</div></div>
</div>
<div class="pft"><i class="cbx"></i><span>Defer Layout Update</span><div class="upd">Update</div></div>
</aside>
<svg class="arw a1" aria-hidden="true"><use href="#arrow"/></svg>
<svg class="arw a2" aria-hidden="true"><use href="#arrow"/></svg>
<svg class="arw a3" aria-hidden="true"><use href="#arrow"/></svg>
<svg class="arw a4" aria-hidden="true"><use href="#arrow"/></svg>
<svg class="arw a5" aria-hidden="true"><use href="#arrow"/></svg>
<svg class="arw a6" aria-hidden="true"><use href="#arrow"/></svg>
</div>
</div>
</div>
</div>
<script src="https://cdn.jsdelivr.net/npm/bootstrap@5.3.0/dist/js/bootstrap.bundle.min.js"></script>
</body>
</html>
